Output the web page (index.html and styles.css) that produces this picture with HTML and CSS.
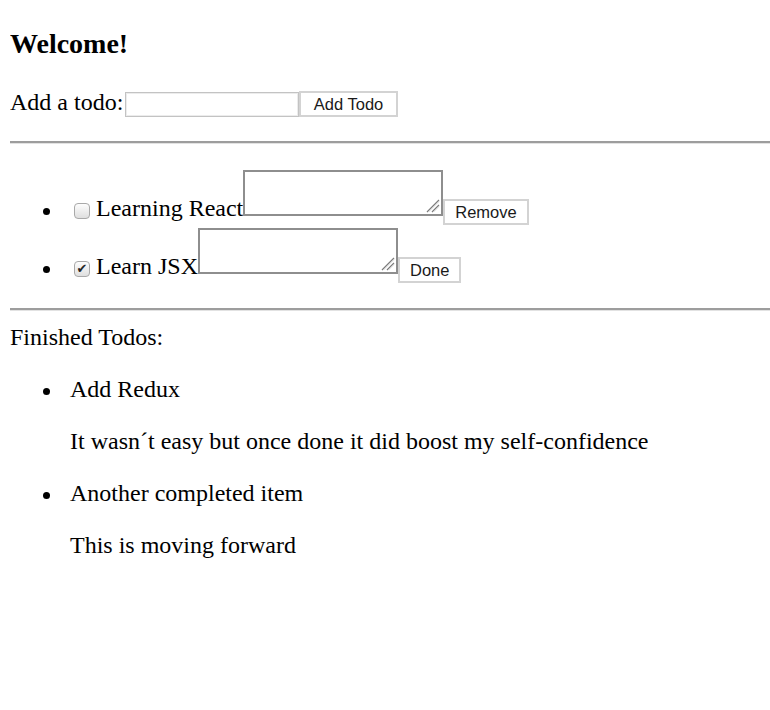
FILE: index.html
```html
<!DOCTYPE html>
<html lang="en">
<head>
<meta charset="utf-8">
<title>Todos</title>
<link rel="stylesheet" href="styles.css">
</head>
<body>
<h3 class="title">Welcome!</h3>
<form class="add-form">Add a todo:<input type="text" class="add-input"><button type="button" class="btn btn-add">Add Todo</button></form>
<hr class="divider">
<ul class="todos">
<li class="todo">
<input type="checkbox" class="check"><span class="todo-text">Learning React</span><span class="note-wrap"><textarea class="note"></textarea><svg class="grip" width="14" height="14" viewBox="0 0 14 14" aria-hidden="true"><path d="M1 13 L13 1 M6 13 L13 6" stroke="#7c7c7c" stroke-width="1.3" fill="none"/><path d="M2.5 13 L13 2.5 M7.5 13 L13 7.5" stroke="#d8d8d8" stroke-width="1" fill="none"/></svg></span><button type="button" class="btn">Remove</button>
</li>
<li class="todo">
<input type="checkbox" class="check" checked><span class="todo-text">Learn JSX</span><span class="note-wrap"><textarea class="note"></textarea><svg class="grip" width="14" height="14" viewBox="0 0 14 14" aria-hidden="true"><path d="M1 13 L13 1 M6 13 L13 6" stroke="#7c7c7c" stroke-width="1.3" fill="none"/><path d="M2.5 13 L13 2.5 M7.5 13 L13 7.5" stroke="#d8d8d8" stroke-width="1" fill="none"/></svg></span><button type="button" class="btn">Done</button>
</li>
</ul>
<hr class="divider">
<div class="finished-label">Finished Todos:</div>
<ul class="finished">
<li class="done-item">Add Redux<p class="detail">It wasn´t easy but once done it did boost my self-confidence</p></li>
<li class="done-item">Another completed item<p class="detail">This is moving forward</p></li>
</ul>
</body>
</html>
```

FILE: styles.css
```css
html {
  background: #ffffff;
}

body {
  margin: 0 0 0 10px;
  font-family: "Liberation Serif", "Times New Roman", serif;
  font-size: 24px;
  line-height: 28px;
  color: #000000;
}

.title {
  margin: 28px 0;
  font-size: 28px;
  line-height: 32px;
  font-weight: bold;
}

.add-form {
  margin: 0 0 24px;
}

.add-input {
  box-sizing: border-box;
  width: 174px;
  height: 25px;
  margin: 0 0 0 2px;
  padding: 1px 3px;
  border: 1px solid #c3c3c3;
  box-shadow: inset 0 0 0 1px #ececec;
  font-family: "Liberation Sans", Arial, sans-serif;
  font-size: 16.5px;
  vertical-align: baseline;
  background: #ffffff;
}

.btn {
  box-sizing: border-box;
  height: 26px;
  margin: 0;
  padding: 0 10px;
  border: 2px solid #d3d3d3;
  border-radius: 0;
  background: #ffffff;
  color: #1a1a1a;
  font-family: "Liberation Sans", Arial, sans-serif;
  font-size: 16.5px;
  line-height: 22px;
  vertical-align: baseline;
}

.btn-add {
  margin-top: 1px;
  padding: 0 12.5px;
}

.divider {
  height: 0;
  margin: 12px 0;
  border: 0;
  border-top: 2px solid #9d9d9d;
  border-bottom: 1px solid #e2e2e2;
}

.todos {
  margin: 24px 0;
  padding-left: 60px;
  list-style: none;
}

.todo {
  display: flex;
  align-items: flex-end;
  height: 58px;
}

.todo::before {
  content: "";
  width: 7px;
  height: 7px;
  margin: 0 20px 11px -27px;
  border-radius: 50%;
  background: #000000;
  flex: none;
}

.check {
  -webkit-appearance: none;
  appearance: none;
  box-sizing: border-box;
  position: relative;
  flex: none;
  width: 16px;
  height: 16px;
  margin: 0 6px 7px 4px;
  border: 1px solid #a9a9a9;
  border-radius: 4px;
  background: linear-gradient(#fdfdfd, #dfdfdf);
}

.check:checked::after {
  content: "\2714";
  position: absolute;
  left: 1.5px;
  top: 0;
  font-family: "DejaVu Sans", sans-serif;
  font-size: 13px;
  line-height: 14px;
  color: #262626;
}

.todo-text {
  margin-bottom: 4px;
  white-space: nowrap;
}

.note-wrap {
  position: relative;
  display: block;
  flex: none;
  margin: 2px 0 10px;
}

.note {
  display: block;
  box-sizing: border-box;
  width: 200px;
  height: 46px;
  margin: 0;
  padding: 2px;
  border: 2px solid #8e8e8e;
  border-radius: 0;
  resize: none;
  font-family: "Liberation Mono", monospace;
  font-size: 16px;
  background: #ffffff;
}

.grip {
  position: absolute;
  right: 3px;
  bottom: 3px;
}

.todo .btn {
  flex: none;
  margin-bottom: 1px;
}

.finished-label {
  margin: 0;
}

.finished {
  margin: 24px 0;
  padding-left: 60px;
  list-style: none;
}

.done-item::before {
  content: "";
  display: inline-block;
  width: 7px;
  height: 7px;
  margin: 0 20px 0 -27px;
  border-radius: 50%;
  background: #000000;
  vertical-align: 2px;
}

.detail {
  margin: 24px 0;
}
```
